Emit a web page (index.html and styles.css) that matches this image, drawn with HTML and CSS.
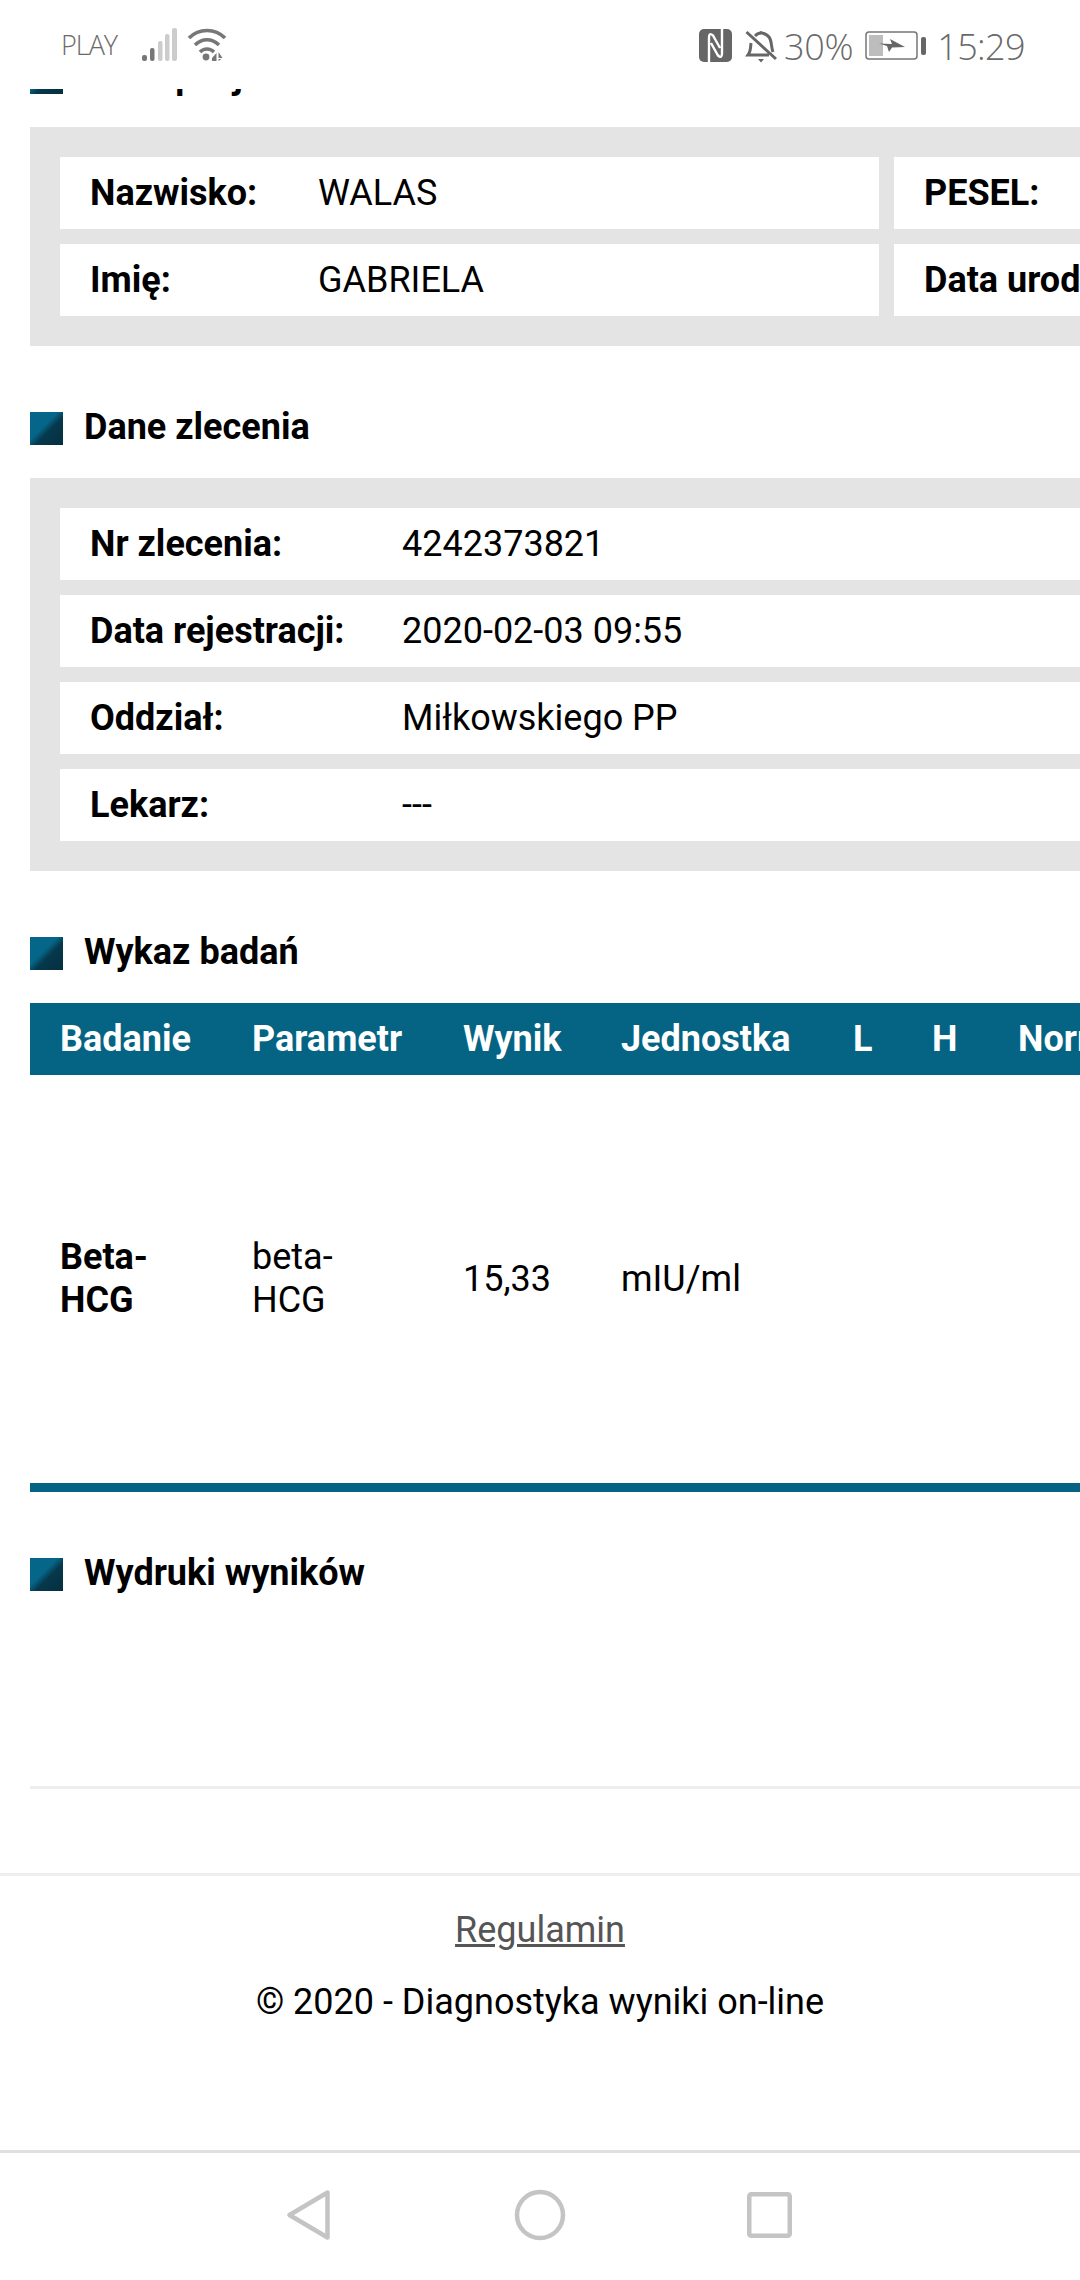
FILE: index.html
```html
<!DOCTYPE html>
<html lang="pl">
<head>
<meta charset="utf-8">
<title>Diagnostyka wyniki on-line</title>
<link rel="stylesheet" href="styles.css">
</head>
<body>
<div class="phone">
  <header class="status">
    <span class="carrier">PLAY</span>
    <svg class="ic-signal" width="35" height="33" viewBox="0 0 35 33"><rect class="on" x="0" y="27" width="5" height="6" rx="2"/><rect class="on" x="8" y="20" width="4.5" height="13" rx="2"/><rect class="off" x="16" y="13" width="4.5" height="20" rx="2"/><rect class="off" x="23" y="6" width="4.5" height="27" rx="2"/><rect class="off" x="30" y="0" width="5" height="33" rx="2"/></svg>
    <svg class="ic-wifi" width="40" height="33" viewBox="0 0 40 33"><path d="M2 10C12 0 28 0 38 10M8 17C15 10 25 10 32 17M13 24C17 20 23 20 27 24" fill="none" stroke="#777" stroke-width="3.6"/><circle cx="19" cy="29" r="3.4" fill="#777"/><path d="M25 30l4.500-5v8h-4.500zM31.500 24l4 6h-4zM31.500 33v-2h3z" fill="#777"/></svg>
    <div class="status-right">
      <svg class="ic-nfc" width="33" height="33" viewBox="0 0 33 33"><rect width="33" height="33" rx="5" fill="#666"/><path d="M10 33V8.500Q10 3 14 6.500L21 19M23 0V24.500Q23 30 19 26.500L12 14" fill="none" stroke="#fff" stroke-width="2.400"/></svg>
      <svg class="ic-bell" width="32" height="34" viewBox="0 0 32 34"><path d="M1.500 3L31 30M6 14C5.500 18 6 22 3 26H24M10 7C14 3 20 3 24 8C27 12 26 18 28 23" fill="none" stroke="#666" stroke-width="3"/><path d="M13 5Q16 -1 19 5M13 30h6l-3 3.500z" fill="#666"/></svg>
      <span class="pct">30%</span>
      <svg class="ic-batt" width="61" height="29" viewBox="0 0 61 29"><rect x="1" y="1" width="51" height="27" rx="3" fill="#fff" stroke="#777" stroke-width="1.500"/><rect x="4" y="4" width="14" height="21" fill="#bdbdbd"/><path d="M14 12.500L27 13L25 8L40 16L27 16.500L24 21L22 15z" fill="#666"/><rect x="56" y="6" width="5" height="18" rx="2" fill="#666"/></svg>
      <span class="clock">15:29</span>
    </div>
  </header>

  <main class="page">
    <div class="scrolled">
      <h2 class="heading"><span class="marker"></span><span class="label">Dane pacjenta</span></h2>
      <section class="panel panel-two">
        <div class="row row-patient"><b>Nazwisko:</b><span>WALAS</span></div>
        <div class="row row-patient"><b>PESEL:</b></div>
        <div class="row row-patient"><b>Imię:</b><span>GABRIELA</span></div>
        <div class="row row-patient"><b>Data urodzenia:</b></div>
      </section>

      <h2 class="heading spaced"><span class="marker"></span><span class="label">Dane zlecenia</span></h2>
      <section class="panel">
        <div class="row row-order"><b>Nr zlecenia:</b><span>4242373821</span></div>
        <div class="row row-order"><b>Data rejestracji:</b><span>2020-02-03 09:55</span></div>
        <div class="row row-order"><b>Oddział:</b><span>Miłkowskiego PP</span></div>
        <div class="row row-order"><b>Lekarz:</b><span>---</span></div>
      </section>

      <h2 class="heading spaced"><span class="marker"></span><span class="label">Wykaz badań</span></h2>
      <table class="results">
        <thead>
          <tr><th class="c1">Badanie</th><th class="c2">Parametr</th><th class="c3">Wynik</th><th class="c4">Jednostka</th><th class="c5">L</th><th class="c6">H</th><th class="c7">Norma</th></tr>
        </thead>
        <tbody>
          <tr><td class="strong">Beta-<br>HCG</td><td>beta-<br>HCG</td><td>15,33</td><td>mIU/ml</td><td></td><td></td><td></td></tr>
        </tbody>
      </table>

      <h2 class="heading spaced"><span class="marker"></span><span class="label">Wydruki wyników</span></h2>
      <div class="rule"></div>

      <footer class="foot">
        <a class="terms" href="#">Regulamin</a>
        <p class="copy">© 2020 - Diagnostyka wyniki on-line</p>
      </footer>
    </div>
  </main>

  <nav class="nav">
    <svg width="60" height="60" viewBox="0 0 60 60"><path d="M49.500 9.500V54.500L11.500 32z" fill="none" stroke="#c4c4c4" stroke-width="4.500" stroke-linejoin="round"/></svg>
    <svg width="60" height="60" viewBox="0 0 60 60"><circle cx="30" cy="32" r="23" fill="none" stroke="#c4c4c4" stroke-width="4.500"/></svg>
    <svg width="60" height="60" viewBox="0 0 60 60"><rect x="7.250" y="11.250" width="40.500" height="41.500" rx="2" fill="none" stroke="#c4c4c4" stroke-width="4.500"/></svg>
  </nav>
</div>
</body>
</html>
```

FILE: styles.css
```css
* { box-sizing: border-box; }
html, body { margin: 0; padding: 0; background: #fff; }
body { font-family: Roboto, "Liberation Sans", sans-serif; color: #000; }

.phone { width: 1080px; height: 2280px; display: flex; flex-direction: column; overflow: hidden; }

.status { height: 89px; flex: none; display: flex; align-items: flex-start; padding: 28px 55px 0 61px; color: #6a6a6a; font-family: "Open Sans", sans-serif; font-weight: 300; background: #fff; }
.carrier { font-size: 27px; line-height: 33px; width: 81px; letter-spacing: -1px; }
.ic-signal .on { fill: #777; }
.ic-signal .off { fill: #ccc; }
.ic-wifi { margin-left: 10px; }
.status-right { margin-left: auto; display: flex; align-items: flex-start; }
.ic-nfc { margin-top: 1px; }
.ic-bell { margin: 1px 0 0 13px; }
.pct { margin-left: 7px; font-size: 36px; line-height: 38px; letter-spacing: -.3px; }
.ic-batt { margin: 3px 0 0 12px; }
.clock { margin-left: 11px; font-size: 36px; line-height: 38px; letter-spacing: -.6px; }

.page { flex: 1; min-height: 0; overflow: hidden; }
.scrolled { margin-top: -28px; }

.heading { margin: 0 0 33px 30px; height: 33px; display: flex; align-items: center; font-size: 36px; font-weight: 700; line-height: 30px; white-space: nowrap; }
.heading.spaced { margin-top: 66px; }
.label { padding-bottom: 3px; }
.marker { width: 33px; height: 33px; margin-right: 21px; flex: none; background: linear-gradient(135deg, #05668a 0%, #05668a 42%, #06384c 58%, #052f3e 100%); }

.panel { width: 1700px; margin-left: 30px; padding: 30px; display: grid; gap: 15px; background: #e4e4e4; }
.panel-two { grid-template-columns: 819px 819px; }
.row { height: 72px; display: flex; align-items: center; padding-left: 30px; background: #fff; font-size: 36px; white-space: nowrap; }
.row b { flex: none; font-weight: 700; }
.row-patient b { width: 228px; }
.row-order b { width: 312px; }

.results { width: 1500px; margin-left: 30px; border-collapse: separate; border-spacing: 0; table-layout: fixed; font-size: 36px; }
.results th { height: 72px; padding: 0 0 0 30px; background: #056484; color: #fff; font-weight: 700; text-align: left; white-space: nowrap; }
.results td { height: 417px; padding: 0 30px; line-height: 43px; vertical-align: middle; border-bottom: 9px solid #056484; }
.strong { font-weight: 700; }
.c1 { width: 192px; }
.c2 { width: 211px; }
.c3 { width: 158px; }
.c4 { width: 232px; }
.c5 { width: 79px; }
.c6 { width: 86px; }

.rule { height: 3px; margin: 195px 0 0 30px; background: #eee; }

.foot { margin-top: 84px; padding-top: 29px; border-top: 3px solid #eee; text-align: center; font-size: 36px; }
.terms { color: #555; text-decoration: underline; line-height: 50px; }
.copy { margin: 22px 0 0; line-height: 50px; }

.nav { height: 130px; flex: none; display: grid; grid-template-columns: repeat(3, 232px); justify-content: center; justify-items: center; padding-top: 30px; border-top: 3px solid #e0e0e0; background: #fff; }
```
